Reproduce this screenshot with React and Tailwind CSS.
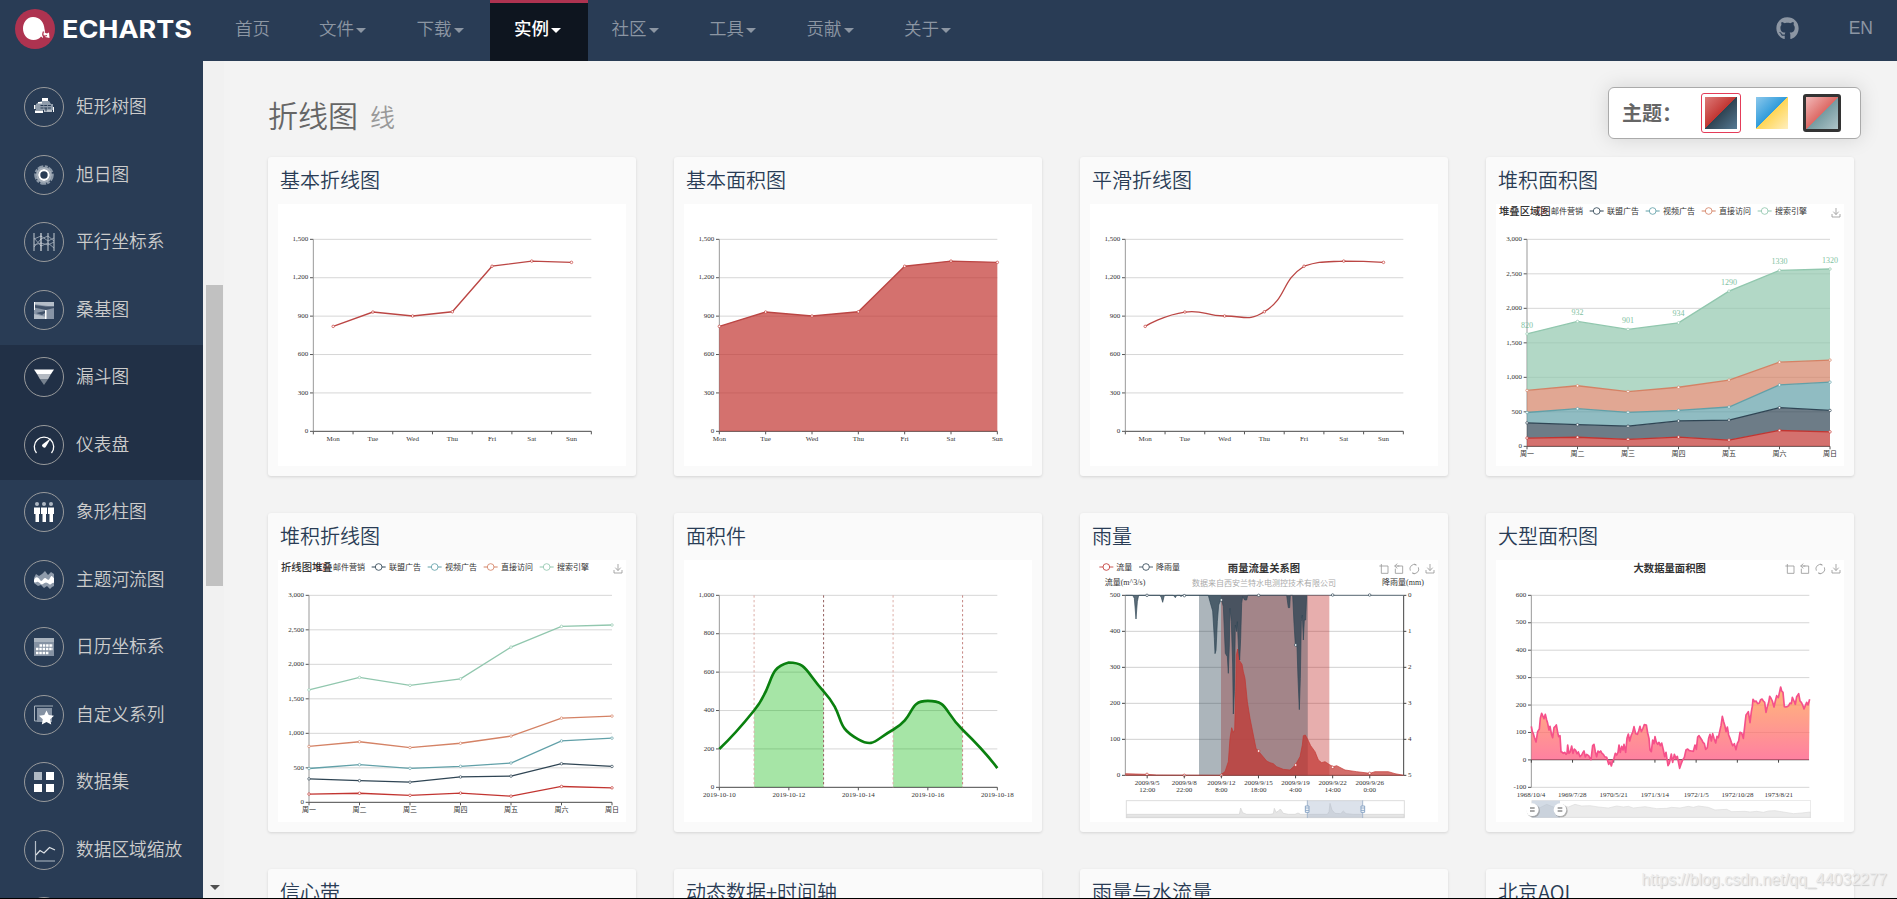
import { Fragment } from "react";
import { FaGithub } from "react-icons/fa";

const COLORS = ["#c23531", "#2f4554", "#61a0a8", "#d48265", "#91c7ae"];

const navItems = ["首页", "文件", "下载", "实例", "社区", "工具", "贡献", "关于"];

const WEEK_EN = ["Mon", "Tue", "Wed", "Thu", "Fri", "Sat", "Sun"];
const WEEK_CN = ["周一", "周二", "周三", "周四", "周五", "周六", "周日"];
const VISITS = [820, 932, 901, 934, 1290, 1330, 1320];

const STACK = [
  [120, 132, 101, 134, 90, 230, 210],
  [220, 182, 191, 234, 290, 330, 310],
  [150, 232, 201, 154, 190, 330, 410],
  [320, 332, 301, 334, 390, 330, 320],
  VISITS,
];

const basicGrid = { left: 106, right: 940, top: 106, bottom: 682 };
const stackGrid = { left: 93, right: 1002, top: 106, bottom: 727 };

const toPoints = (pts) => pts.map((p) => p.join(",")).join(" ");

// bezier through all the points, control points stay inside the bounds of the data
const smoothPath = (pts, smooth) => {
  const ys = pts.map((p) => p[1]);
  const clamp = (y) => Math.max(Math.min(...ys), Math.min(Math.max(...ys), y));
  let d = `M${pts[0][0]} ${pts[0][1]}`;
  let cp = pts[0];
  for (let i = 1; i < pts.length; i++) {
    const [x, y] = pts[i];
    const prev = pts[i - 1];
    const next = pts[i + 1];
    let cp1 = [x, y];
    let cpNext = [x, y];
    if (next) {
      const v = [next[0] - prev[0], next[1] - prev[1]];
      const lenPrev = Math.hypot(x - prev[0], y - prev[1]);
      const lenNext = Math.hypot(x - next[0], y - next[1]);
      const ratio = lenNext / (lenNext + lenPrev);
      cp1 = [x - v[0] * smooth * (1 - ratio), clamp(y - v[1] * smooth * (1 - ratio))];
      cpNext = [x + v[0] * smooth * ratio, clamp(y + v[1] * smooth * ratio)];
    }
    d += `C${cp[0]} ${cp[1]} ${cp1[0]} ${cp1[1]} ${x} ${y}`;
    cp = cpNext;
  }
  return d;
};

const Plot = ({ children }) => (
  <svg
    viewBox="0 0 1044 786"
    className="block w-[348px] h-[262px] bg-white font-normal font-['Liberation_Serif','Noto_Sans_CJK_SC',serif]"
  >
    {children}
  </svg>
);

const YAxis = ({ grid, ticks, min = 0, max }) => {
  const h = grid.bottom - grid.top;
  return (
    <>
      {ticks.map((t) => {
        const y = grid.bottom - ((t - min) / (max - min)) * h;
        return (
          <g key={t}>
            <line x1={grid.left} x2={grid.right} y1={y} y2={y} stroke="#d6d6d6" strokeWidth="3" />
            <line x1={grid.left - 10} x2={grid.left} y1={y} y2={y} stroke="#555" strokeWidth="3" />
            <text x={grid.left - 15} y={y + 5} textAnchor="end" fontSize="21" fill="#333">
              {t.toLocaleString("en-US")}
            </text>
          </g>
        );
      })}
      <line x1={grid.left} x2={grid.left} y1={grid.top} y2={grid.bottom} stroke="#999" strokeWidth="3" />
    </>
  );
};

const XAxis = ({ grid, labels, gap }) => {
  const w = grid.right - grid.left;
  const n = gap ? labels.length : labels.length - 1;
  const ticks = Array.from({ length: n + 1 }, (_, i) => grid.left + (w / n) * i);
  return (
    <>
      <line x1={grid.left} x2={grid.right} y1={grid.bottom} y2={grid.bottom} stroke="#555" strokeWidth="3" />
      {ticks.map((x) => (
        <line key={x} x1={x} x2={x} y1={grid.bottom} y2={grid.bottom + 9} stroke="#555" strokeWidth="3" />
      ))}
      {labels.map((l, i) => (
        <text
          key={l}
          x={grid.left + (w / n) * (gap ? i + 0.5 : i)}
          y={grid.bottom + 29}
          textAnchor="middle"
          fontSize="21"
          fill="#333"
        >
          {l}
        </text>
      ))}
    </>
  );
};

const Dots = ({ pts, color }) =>
  pts.map(([x, y]) => <circle key={x} cx={x} cy={y} r="3.8" fill="#fff" stroke={color} strokeWidth="2" />);

const DownloadTool = ({ y = 26 }) => (
  <path
    d={`M1020 ${y - 14}V${y + 5}M1012 ${y - 3}L1020 ${y + 6}L1028 ${y - 3}M1008 ${y + 4}V${y + 13}H1032V${y + 4}`}
    fill="none"
    stroke="#999"
    strokeWidth="2.5"
  />
);

const Toolbox = () => (
  <>
    <g fill="none" stroke="#999" strokeWidth="2.5">
      <path d="M868 18H894V40H874V12" />
      <path d="M922 18H938V40H916V26M914 18H928M922 11L914 18L922 25" />
      <path d="M961 32A13 13 0 0 1 979 15M985 22A13 13 0 0 1 967 39M979 15L973 12M967 39L973 42" />
    </g>
    <DownloadTool />
  </>
);

const LineChart = ({ smooth, area }) => {
  const grid = basicGrid;
  const w = grid.right - grid.left;
  const pts = VISITS.map((v, i) => [
    area ? grid.left + (w / 6) * i : grid.left + (w / 7) * (i + 0.5),
    grid.bottom - (v / 1500) * (grid.bottom - grid.top),
  ]);
  return (
    <Plot>
      <YAxis grid={grid} ticks={[0, 300, 600, 900, 1200, 1500]} max={1500} />
      <XAxis grid={grid} labels={WEEK_EN} gap={!area} />
      {area && (
        <polygon
          points={`${toPoints(pts)} ${grid.right},${grid.bottom} ${grid.left},${grid.bottom}`}
          fill="#c23531"
          fillOpacity="0.7"
        />
      )}
      <path d={smoothPath(pts, smooth ? 0.5 : 0)} fill="none" stroke="#bb4644" strokeWidth="4" />
      <Dots pts={pts} color="#c23531" />
    </Plot>
  );
};

const StackChart = ({ title, area }) => {
  const grid = stackGrid;
  const w = grid.right - grid.left;
  const h = grid.bottom - grid.top;
  const sums = WEEK_CN.map(() => 0);
  const layers = STACK.map((row) => {
    const base = sums.map((s, i) => [grid.left + (w / 6) * i, grid.bottom - (s / 3000) * h]);
    row.forEach((v, i) => (sums[i] += v));
    const pts = sums.map((s, i) => [grid.left + (w / 6) * i, grid.bottom - (s / 3000) * h]);
    return { base, pts };
  });
  return (
    <Plot>
      {["邮件营销", "联盟广告", "视频广告", "直接访问", "搜索引擎"].map((name, i) => (
        <g key={name}>
          <line x1={113 + i * 168} x2={155 + i * 168} y1="21" y2="21" stroke={COLORS[i]} strokeWidth="3" />
          <circle cx={134 + i * 168} cy="21" r="10" fill="#fff" stroke={COLORS[i]} strokeWidth="2.5" />
          <text x={165 + i * 168} y="30" fontSize="24" fill="#333">
            {name}
          </text>
        </g>
      ))}
      <text x="9" y="34" fontSize="31" fontWeight="500" fill="#333">
        {title}
      </text>
      <DownloadTool />
      <YAxis grid={grid} ticks={[0, 500, 1000, 1500, 2000, 2500, 3000]} max={3000} />
      <XAxis grid={grid} labels={WEEK_CN} />
      {area &&
        layers.map(({ base, pts }, i) => (
          <polygon key={i} points={toPoints([...pts, ...[...base].reverse()])} fill={COLORS[i]} fillOpacity="0.7" />
        ))}
      {layers.map(({ pts }, i) => (
        <g key={i}>
          <polyline points={toPoints(pts)} fill="none" stroke={COLORS[i]} strokeWidth="4" />
          <Dots pts={pts} color={COLORS[i]} />
        </g>
      ))}
      {area &&
        layers[4].pts.map(([x, y], i) => (
          <text key={x} x={x} y={y - 19} textAnchor="middle" fontSize="24" fill="#7fbfa2">
            {VISITS[i]}
          </text>
        ))}
    </Plot>
  );
};

const PiecesChart = () => {
  const grid = basicGrid;
  const step = (grid.right - grid.left) / 8;
  const pts = [200, 400, 650, 500, 250, 300, 450, 300, 100].map((v, i) => [
    grid.left + step * i,
    grid.bottom - (v / 1000) * (grid.bottom - grid.top),
  ]);
  const line = smoothPath(pts, 0.6);
  return (
    <Plot>
      <clipPath id="pieces">
        <rect x={grid.left + step} y="0" width={step * 2} height={grid.bottom} />
        <rect x={grid.left + step * 5} y="0" width={step * 2} height={grid.bottom} />
      </clipPath>
      <YAxis grid={grid} ticks={[0, 200, 400, 600, 800, 1000]} max={1000} />
      <XAxis grid={grid} labels={["2019-10-10", "2019-10-12", "2019-10-14", "2019-10-16", "2019-10-18"]} />
      <path
        d={`${line}L${grid.right} ${grid.bottom}L${grid.left} ${grid.bottom}Z`}
        fill="#00b400"
        fillOpacity="0.35"
        clipPath="url(#pieces)"
      />
      {[
        [1, "#dcaea8"],
        [3, "#94605f"],
        [5, "#dcaea8"],
        [7, "#c58683"],
      ].map(([i, c]) => (
        <line
          key={i}
          x1={grid.left + step * i}
          x2={grid.left + step * i}
          y1={grid.top}
          y2={grid.bottom}
          stroke={c}
          strokeWidth="3"
          strokeDasharray="7 7"
        />
      ))}
      <path d={line} fill="none" stroke="#0a800f" strokeWidth="8" />
    </Plot>
  );
};

const rain =
  "166,271 188,271 193,280 198,342 202,290 206,271 270,271 274,278 278,292 282,275 285,271 310,271 316,278 320,271 330,271 333,275 337,271 415,271 420,290 428,318 433,400 435,446 438,436 442,350 446,300 450,290 455,285 460,305 466,445 472,455 475,505 478,420 480,310 484,350 488,480 490,627 493,560 496,360 500,380 502,350 506,440 509,465 512,400 515,295 518,275 524,285 530,285 533,271 650,271 655,308 659,308 661,271 668,271 672,355 676,420 681,425 684,520 688,614 691,520 694,350 697,330 700,405 703,345 707,345 710,271";
const flow =
  "166,806 230,808 260,810 450,811 465,800 475,770 480,700 485,668 490,682 494,675 497,560 499,450 503,432 507,465 516,478 520,500 525,520 532,590 540,640 550,690 558,730 565,738 575,750 590,768 600,773 610,776 620,785 640,793 660,795 676,780 690,755 697,720 700,692 706,690 713,703 722,722 735,740 745,765 755,773 765,770 780,780 790,785 800,782 825,795 860,800 900,805 915,800 955,800 975,806 1001,811";

const RainChart = () => (
  <Plot>
    <g transform="translate(-60 -165)" fill="#333">
      <g fill="#fff" strokeWidth="2.5">
        <path d="M88 186H130" stroke="#c23531" />
        <circle cx="109" cy="186" r="10" stroke="#c23531" />
        <path d="M207 186H249" stroke="#2f4554" />
        <circle cx="228" cy="186" r="10" stroke="#2f4554" />
      </g>
      <g fontSize="24">
        <text x="139" y="195">流量</text>
        <text x="258" y="195">降雨量</text>
        <text x="165" y="240" textAnchor="middle">流量(m^3/s)</text>
        <text x="999" y="240" textAnchor="middle">降雨量(mm)</text>
        <text x="582" y="243" textAnchor="middle" fill="#aaa">数据来自西安兰特水电测控技术有限公司</text>
      </g>
      <text x="582" y="200" textAnchor="middle" fontSize="31" fontWeight="bold">雨量流量关系图</text>
      {[0, 1, 2, 3, 4, 5].map((i) => (
        <g key={i} fontSize="21">
          <path d={`M166 ${271 + i * 108}H1001`} stroke="#d0d0d0" strokeWidth="3" />
          <path d={`M156 ${271 + i * 108}H166M1001 ${271 + i * 108}H1009`} stroke="#444" strokeWidth="3" />
          <text x="151" y={276 + i * 108} textAnchor="end">{500 - i * 100}</text>
          <text x="1014" y={276 + i * 108}>{i}</text>
        </g>
      ))}
      <path d="M166 271V811" stroke="#999" strokeWidth="3" />
      <path d="M1001 271V811" stroke="#444" strokeWidth="3" />
      <path d="M166 271H1001" stroke="#62717c" strokeWidth="3" />
      <rect x="387" y="271" width="326" height="540" fill="#2f4554" fillOpacity="0.4" />
      <rect x="453" y="271" width="325" height="540" fill="#c23531" fillOpacity="0.4" />
      <rect x="453" y="271" width="260" height="540" fill="#8f8a90" fillOpacity="0.45" />
      <polygon points={`${flow} 166,811`} fill="#c23531" fillOpacity="0.72" />
      <polyline points={flow} fill="none" stroke="#c23531" strokeWidth="2" />
      <polygon points={rain} fill="#2f4554" fillOpacity="0.78" />
      <polyline points={rain} fill="none" stroke="#2f4554" strokeWidth="2" />
      <path d="M166 811H1001" stroke="#8c4542" strokeWidth="3" />
      <g fill="#fff" stroke="#c23531" strokeWidth="2">
        {[[231, 808], [343, 811], [454, 811], [566, 738], [677, 780], [788, 787], [899, 805]].map(([x, y]) => (
          <circle key={x} cx={x} cy={y} r="3.8" />
        ))}
      </g>
      <g fill="#fff" stroke="#2f4554" strokeWidth="2">
        {[[231, 271], [343, 272], [454, 285], [566, 271], [677, 420], [788, 270], [899, 270]].map(([x, y]) => (
          <circle key={x} cx={x} cy={y} r="3.8" />
        ))}
      </g>
      {[
        ["2009/9/5", "12:00"],
        ["2009/9/8", "22:00"],
        ["2009/9/12", "8:00"],
        ["2009/9/15", "18:00"],
        ["2009/9/19", "4:00"],
        ["2009/9/22", "14:00"],
        ["2009/9/26", "0:00"],
      ].map(([day, time], i) => (
        <g key={day} fontSize="21" textAnchor="middle">
          <path d={`M${231.5 + i * 111.3} 811V820`} stroke="#444" strokeWidth="3" />
          <text x={231.5 + i * 111.3} y="840">{day}</text>
          <text x={231.5 + i * 111.3} y="862">{time}</text>
        </g>
      ))}
      <rect x="169" y="887" width="834" height="51" fill="#fff" stroke="#ddd" strokeWidth="3" />
      <path
        d="M170 937V928H508L512 909L518 923L530 928H600L610 926L613 910L618 922L624 919L631 912L640 925L655 928H675L684 924L692 928H772L777 920L780 895L786 915L795 925L812 926L820 918L828 926L850 928H1002V937Z"
        fill="#e6e6e6"
        stroke="#d3d3d3"
        strokeWidth="2"
      />
      <rect x="712" y="887" width="166" height="51" fill="#a7b7cc" fillOpacity="0.4" />
      <path d="M712 886V939M878 886V939" stroke="#a7b7cc" strokeWidth="3" />
      <path
        d="M706 903H717V922H706ZM706 909H717M706 916H717M873 903H884V922H873ZM873 909H884M873 916H884"
        fill="#fff"
        stroke="#8ba6c6"
        strokeWidth="3"
      />
    </g>
    <Toolbox />
  </Plot>
);

const bigData =
  "154,664 157,680 160,686 163,697 168,711 173,680 178,672 181,640 185,625 189,634 192,641 196,628 200,645 203,655 207,675 210,664 215,690 218,698 222,668 226,664 229,660 233,682 236,695 240,692 243,740 247,742 250,745 254,742 258,748 261,745 263,720 267,745 271,740 275,723 279,745 283,732 287,736 291,746 295,741 300,755 305,750 308,744 312,738 316,756 320,748 326,752 330,760 333,764 338,722 342,718 346,740 350,755 354,738 358,742 362,738 366,745 370,748 374,755 380,757 386,778 390,772 394,783 398,768 402,760 406,745 410,750 414,742 417,720 421,742 425,724 429,735 432,718 437,742 441,700 445,687 449,708 454,690 458,682 462,665 467,686 472,688 476,678 480,664 484,680 488,672 493,659 499,660 503,684 507,700 510,735 514,740 518,705 522,716 525,695 529,712 533,718 537,712 541,722 545,714 550,735 554,755 558,742 564,782 568,775 574,747 578,772 583,748 588,760 592,754 596,775 599,790 604,775 608,765 613,757 618,735 623,732 628,737 634,738 640,739 645,720 649,733 653,696 657,692 661,698 665,704 669,712 673,716 677,733 682,728 686,700 690,688 694,708 698,686 702,700 707,714 711,694 715,698 719,680 723,662 727,634 731,650 735,664 738,680 742,666 746,690 750,700 754,712 758,722 763,716 768,734 772,715 776,708 780,682 785,684 790,700 794,665 798,630 802,625 805,620 810,653 814,620 817,604 819,583 824,590 828,588 833,596 838,594 842,584 846,582 850,588 854,592 858,622 862,605 866,592 869,574 873,580 877,588 882,606 886,588 890,572 895,578 899,560 902,546 905,558 909,562 913,605 917,606 922,605 926,602 930,594 934,596 937,577 942,588 946,598 950,575 956,566 960,588 964,592 968,600 972,612 976,602 980,592 984,600 989,583";

const BigAreaChart = () => {
  const grid = basicGrid;
  return (
    <Plot>
      <defs>
        <linearGradient id="bigArea" x1="0" y1="0" x2="0" y2="1">
          <stop offset="0" stopColor="#ff9e44" />
          <stop offset="1" stopColor="#ff4683" />
        </linearGradient>
      </defs>
      <text x="521" y="35" textAnchor="middle" fontSize="31" fontWeight="bold" fill="#333">
        大数据量面积图
      </text>
      <Toolbox />
      <YAxis grid={grid} ticks={[-100, 0, 100, 200, 300, 400, 500, 600]} min={-100} max={600} />
      <g transform="translate(-48 -165)">
        <path d="M154 764H987" stroke="#444" strokeWidth="3" />
        {["1968/10/4", "1969/7/28", "1970/5/21", "1971/3/14", "1972/1/5", "1972/10/28", "1973/8/21"].map((d, i) => (
          <Fragment key={d}>
            <path d={`M${154 + i * 123.6} 764V773`} stroke="#444" strokeWidth="3" />
            <text x={153 + i * 123.9} y="875" textAnchor="middle" fontSize="21" fill="#333">
              {d}
            </text>
          </Fragment>
        ))}
        <polygon points={`${bigData} 987,764 154,764`} fill="url(#bigArea)" fillOpacity="0.72" />
        <polyline points={bigData} fill="none" stroke="#f5508a" strokeWidth="5" strokeLinejoin="round" />
        <rect x="155" y="887" width="837" height="51" fill="#fff" stroke="#e2e2e2" strokeWidth="2" />
        <path
          d="M156 937V903L180 908L200 898L220 906L240 900L265 906L285 898L305 903L330 902L355 906L385 909L410 903L430 906L445 904L460 909L495 905L530 911L560 910L575 907L600 909L625 904L640 907L655 903L685 907L705 915L740 913L755 920L795 919L810 921L830 919L850 922L865 918L885 917L910 921L940 926L965 924L991 921V937Z"
          fill="#ececec"
          stroke="#dcdcdc"
          strokeWidth="2"
        />
        <rect x="156" y="887" width="84" height="51" fill="#a7b7cc" fillOpacity="0.5" />
        {[157, 240].map((x) => (
          <g key={x}>
            <circle cx={x + 3} cy="917" r="20" fill="#888" fillOpacity="0.6" />
            <circle cx={x} cy="914" r="19" fill="#fff" />
            <path d={`M${x - 7} 909H${x + 7}M${x - 7} 918H${x + 7}`} stroke="#555" strokeWidth="3" />
          </g>
        ))}
      </g>
    </Plot>
  );
};

const cards = [
  { title: "基本折线图", chart: <LineChart /> },
  { title: "基本面积图", chart: <LineChart area /> },
  { title: "平滑折线图", chart: <LineChart smooth /> },
  { title: "堆积面积图", chart: <StackChart title="堆叠区域图" area /> },
  { title: "堆积折线图", chart: <StackChart title="折线图堆叠" /> },
  { title: "面积件", chart: <PiecesChart /> },
  { title: "雨量", chart: <RainChart /> },
  { title: "大型面积图", chart: <BigAreaChart /> },
  { title: "信心带" },
  { title: "动态数据+时间轴" },
  { title: "雨量与水流量" },
  { title: "北京AQI" },
];

const sideItems = [
  {
    name: "矩形树图",
    icon: (
      <>
        <path d="M4 9L7 7L10 6H17L19 9H21V15H4Z" fill="#8f9cab" />
        <path d="M10 3H16V6H10ZM6 7H10V8.5H6ZM2 10H3.5V14H2ZM3 15.5H11V18H3ZM21 12H22V17H21Z" fill="#fff" />
        <path d="M12 15H20V17H12Z" fill="#b9c1ca" />
        <path d="M8.5 10.500H19M8.500 13H19M14 13V17" stroke="#293c55" strokeWidth="1" strokeDasharray="3 .7" />
      </>
    ),
  },
  {
    name: "旭日图",
    icon: (
      <>
        <circle cx="12" cy="12" r="8.800" fill="none" stroke="#8b98a7" strokeWidth="2" strokeDasharray="6 1.500 3 1" />
        <circle cx="12" cy="12" r="7" fill="none" stroke="#a5afba" strokeWidth="2" />
        <circle cx="12" cy="12" r="4.800" fill="none" stroke="#fff" strokeWidth="2.200" />
      </>
    ),
  },
  {
    name: "平行坐标系",
    icon: (
      <>
        <path d="M2 9L9 6L16 11L22 8M2 17L9 9L16 6L22 11M2 8L9 16L16 13L22 18M2 15L9 13L16 15L22 12" fill="none" stroke="#8d99a8" />
        <path d="M2 3V21M16 3V21M22 3V21" stroke="#c3cad1" />
        <path d="M9 3V21" stroke="#fff" />
      </>
    ),
  },
  {
    name: "桑基图",
    icon: (
      <>
        <path d="M2 4H22V21H2Z" fill="#8794a5" />
        <path d="M2 4H22V8H16L2 6ZM2 16L14 19V21H2Z" fill="#b5bec8" />
        <path d="M2 7L14 8.500L22 8.500V10L14 12L2 9.500ZM4 15L13 13V15L10 17Z" fill="#293c55" fillOpacity=".75" />
        <path d="M13 12H14.500V21H13ZM2 4H3V12H2Z" fill="#fff" />
      </>
    ),
  },
  {
    name: "漏斗图",
    dark: true,
    icon: (
      <>
        <path d="M2 4.500H22L19 9H5Z" fill="#fff" />
        <path d="M5 9H19L16.200 14H7.800Z" fill="#b4bac2" />
        <path d="M7.800 14H16.200L12 20Z" fill="#77828f" />
      </>
    ),
  },
  {
    name: "仪表盘",
    dark: true,
    icon: (
      <>
        <path d="M4.500 20A9.700 9.700 0 1 1 19.500 20" fill="none" stroke="#fff" strokeWidth="1.300" />
        <path d="M19 5L14 13.500A2 2 0 1 1 11 11Z" fill="#fff" />
      </>
    ),
  },
  {
    name: "象形柱图",
    icon: (
      <>
        {[5, 12, 19].map((x) => (
          <g key={x} transform={`translate(${x - 5} 0)`}>
            <circle cx="5" cy="4" r="2" fill="#aeb8c3" />
            <path d="M2 7.500H8V14H7V22H3.500V14H2Z" fill="#fff" />
          </g>
        ))}
      </>
    ),
  },
  {
    name: "主题河流图",
    icon: (
      <>
        <path d="M2 10L4 6L7 8L10 6L13 3L16 7L19 4L22 6V18L20 19L18 21L15 18L12 20L9 17L6 18L2 15Z" fill="#8f9bab" />
        <path d="M2 12C4 8 6 9 8 12S11 10 13 10S16 14 18 10S20 9 22 10V15C20 14 19 18 17 16S13 14 11 16S7 13 5 14S3 14 2 14Z" fill="#fff" />
      </>
    ),
  },
  {
    name: "日历坐标系",
    icon: (
      <>
        <path d="M2 3H22V21H2Z" fill="#8592a3" />
        <path d="M2 3H22V7H2Z" fill="#a9b3be" />
        <path d="M7.500 10.500H21M4 14H21M4 18H17" stroke="#fff" strokeWidth="2.500" strokeDasharray="2.500 .8" />
      </>
    ),
  },
  {
    name: "自定义系列",
    icon: (
      <>
        <path d="M5 18H2.500V3H21" fill="none" stroke="#a9b3be" strokeWidth="1" />
        <path d="M5 5H20V19H5Z" fill="#8592a3" />
        <path
          d="M14.500 7.500L16.700 12L22 12.700L18.200 16.200L19.200 21.500L14.500 19L9.800 21.500L10.800 16.200L7 12.700L12.300 12Z"
          fill="#fff"
        />
      </>
    ),
  },
  {
    name: "数据集",
    icon: (
      <>
        <path d="M2 2H10V10H2Z" fill="#aeb8c3" />
        <path d="M14 2H22V10H14ZM2 14H10V22H2ZM14 14H22V22H14Z" fill="#fff" />
      </>
    ),
  },
  {
    name: "数据区域缩放",
    icon: (
      <>
        <path d="M3.500 3V23H23" fill="none" stroke="#b4bdc7" strokeWidth="1.200" />
        <path d="M4 17L8 12.500L12 15L17.500 9.500L23 12" fill="none" stroke="#dfe3e7" strokeWidth="1.200" />
      </>
    ),
  },
  { name: "", icon: null },
];

const Logo = () => (
  <svg viewBox="0 0 180 42" className="w-[180px] h-[42px]">
    <circle cx="20" cy="21" r="20" fill="#ae3350" />
    <path
      d="M18 9C11.500 9 8 15 8 20.500C8 26.500 12 32 18.500 32C22 32 24.500 30.500 26 28.500L28 30C28 27 31 25 29.500 21C29 14 25 9 18 9Z"
      fill="#fff"
    />
    <path d="M28 24L30 29L34.500 30L34 24.500L32 25.500Z" fill="#fff" />
    <path d="M28.500 23.500C27.500 26 27 27 28.500 28.500L32 27.500" fill="none" stroke="#ae3350" strokeWidth="1.200" />
    <text
      x="47"
      y="29.500"
      fontSize="24.500"
      fontWeight="700"
      fill="#fff"
      textLength="130"
      lengthAdjust="spacingAndGlyphs"
      className="font-['Inter',sans-serif]"
    >
      ECHARTS
    </text>
  </svg>
);

const Header = () => (
  <header className="flex items-start h-[61px] shrink-0 bg-[#293c55] text-[17.5px] text-[#8c96a3]">
    <div className="w-[196px] pl-[15px] pt-2 shrink-0">
      <Logo />
    </div>
    <nav className="flex pl-[15px]">
      {navItems.map((item, i) => (
        <a
          key={item}
          className={`flex h-[61px] items-center border-t-[3px] pl-6 pb-[7px] ${i === 0 ? "w-[84px]" : "w-[97.500px]"} ${
            i === 3 ? "bg-[#0e151f] border-[#ae3350] text-white font-medium" : "border-transparent"
          }`}
        >
          {item}
          {i > 0 && <span className="mt-1 ml-[2px] border-x-[5px] border-x-transparent border-t-[5px] border-t-current" />}
        </a>
      ))}
    </nav>
    <div className="ml-auto flex h-[57px] items-center pr-6">
      <FaGithub className="w-[23px] h-[23px] mr-[50px]" />
      <span className="font-['Liberation_Sans',sans-serif]">EN</span>
    </div>
  </header>
);

const Sidebar = () => (
  <aside className="w-[203px] shrink-0 overflow-hidden bg-[#293c55] pt-[14px]">
    {sideItems.map(({ name, icon, dark }) => (
      <a key={name} className={`flex h-[67.500px] pl-6 pt-3 ${dark ? "bg-[#213046]" : ""}`}>
        <span className="flex w-10 h-10 shrink-0 items-center justify-center rounded-full border border-[#989a9c]">
          <svg viewBox="0 0 24 24" className="w-6 h-6">
            {icon}
          </svg>
        </span>
        <span className="ml-3 h-9 leading-9 text-[17.700px] text-[#ccc] whitespace-nowrap">{name}</span>
      </a>
    ))}
  </aside>
);

const Scrollbar = () => (
  <div className="flex flex-col w-[21px] shrink-0 items-center bg-[#f1f1f1] pl-[2px] pt-56">
    <div className="w-[17px] h-[301px] bg-[#c1c1c1]" />
    <div className="mt-auto mb-2 border-x-[5px] border-x-transparent border-t-[5px] border-t-[#505050]" />
  </div>
);

const ThemeBox = () => (
  <div className="flex items-center w-[253px] h-[52px] pl-[13px] bg-white border border-[#aaa] rounded-md shadow-[0_0_20px_rgba(0,0,0,0.13)]">
    <span className="w-[79px] text-[20px] font-bold text-[#666] whitespace-nowrap">主题：</span>
    <span className="w-10 h-10 p-[3px] rounded-[3px] border border-[#e43c59]">
      <span className="block w-full h-full bg-[linear-gradient(135deg,#dd7a78,#c23531_50%,#2f4554_50%,#557a94)]" />
    </span>
    <span className="ml-[15px] w-[32px] h-[32px] bg-[linear-gradient(135deg,#8cc8ec,#2e9bdb_50%,#ffd657_50%,#ffefc0)]" />
    <span className="ml-[15px] w-[38px] h-[38px] rounded-[3px] border-[3px] border-[#333] bg-[linear-gradient(135deg,#f2b8b8,#dd6b66_50%,#759aa0_50%,#b0c5c9)]" />
  </div>
);

const App = () => {
  return (
    <div className="relative flex flex-col w-[1897px] h-[899px] overflow-hidden border-b border-black bg-[#f3f3f3] font-['Noto_Sans_CJK_SC',sans-serif] font-[350]">
      <Header />
      <div className="flex flex-1 min-h-0">
        <Sidebar />
        <Scrollbar />
        <main className="flex-1 overflow-hidden pl-11 pr-9 pt-[26px]">
          <div className="flex h-[70px] justify-between">
            <h1 className="flex items-baseline h-[54px] leading-[54px] text-[30px] text-[#666]">
              折线图 <small className="ml-3 text-[25px] text-[#999]">线</small>
            </h1>
            <ThemeBox />
          </div>
          <div className="grid grid-cols-[repeat(4,368px)] gap-x-[38px] gap-y-[37px]">
            {cards.map(({ title, chart }) => (
              <div key={title} className="h-[319px] rounded-[3px] bg-[#fafafa] px-[10px] shadow-[0_1px_3px_rgba(0,0,0,0.13)]">
                <h4 className="h-[47px] pl-[2px] leading-[45px] text-[20px] text-[#293c55]">{title}</h4>
                {chart}
              </div>
            ))}
          </div>
        </main>
      </div>
      <div className="absolute right-[10px] bottom-[6px] text-[16px] font-normal text-[#ebebeb] font-['Liberation_Sans',sans-serif] [text-shadow:1px_1px_1px_#ccc]">
        https://blog.csdn.net/qq_44032277
      </div>
    </div>
  );
};

export default App;
